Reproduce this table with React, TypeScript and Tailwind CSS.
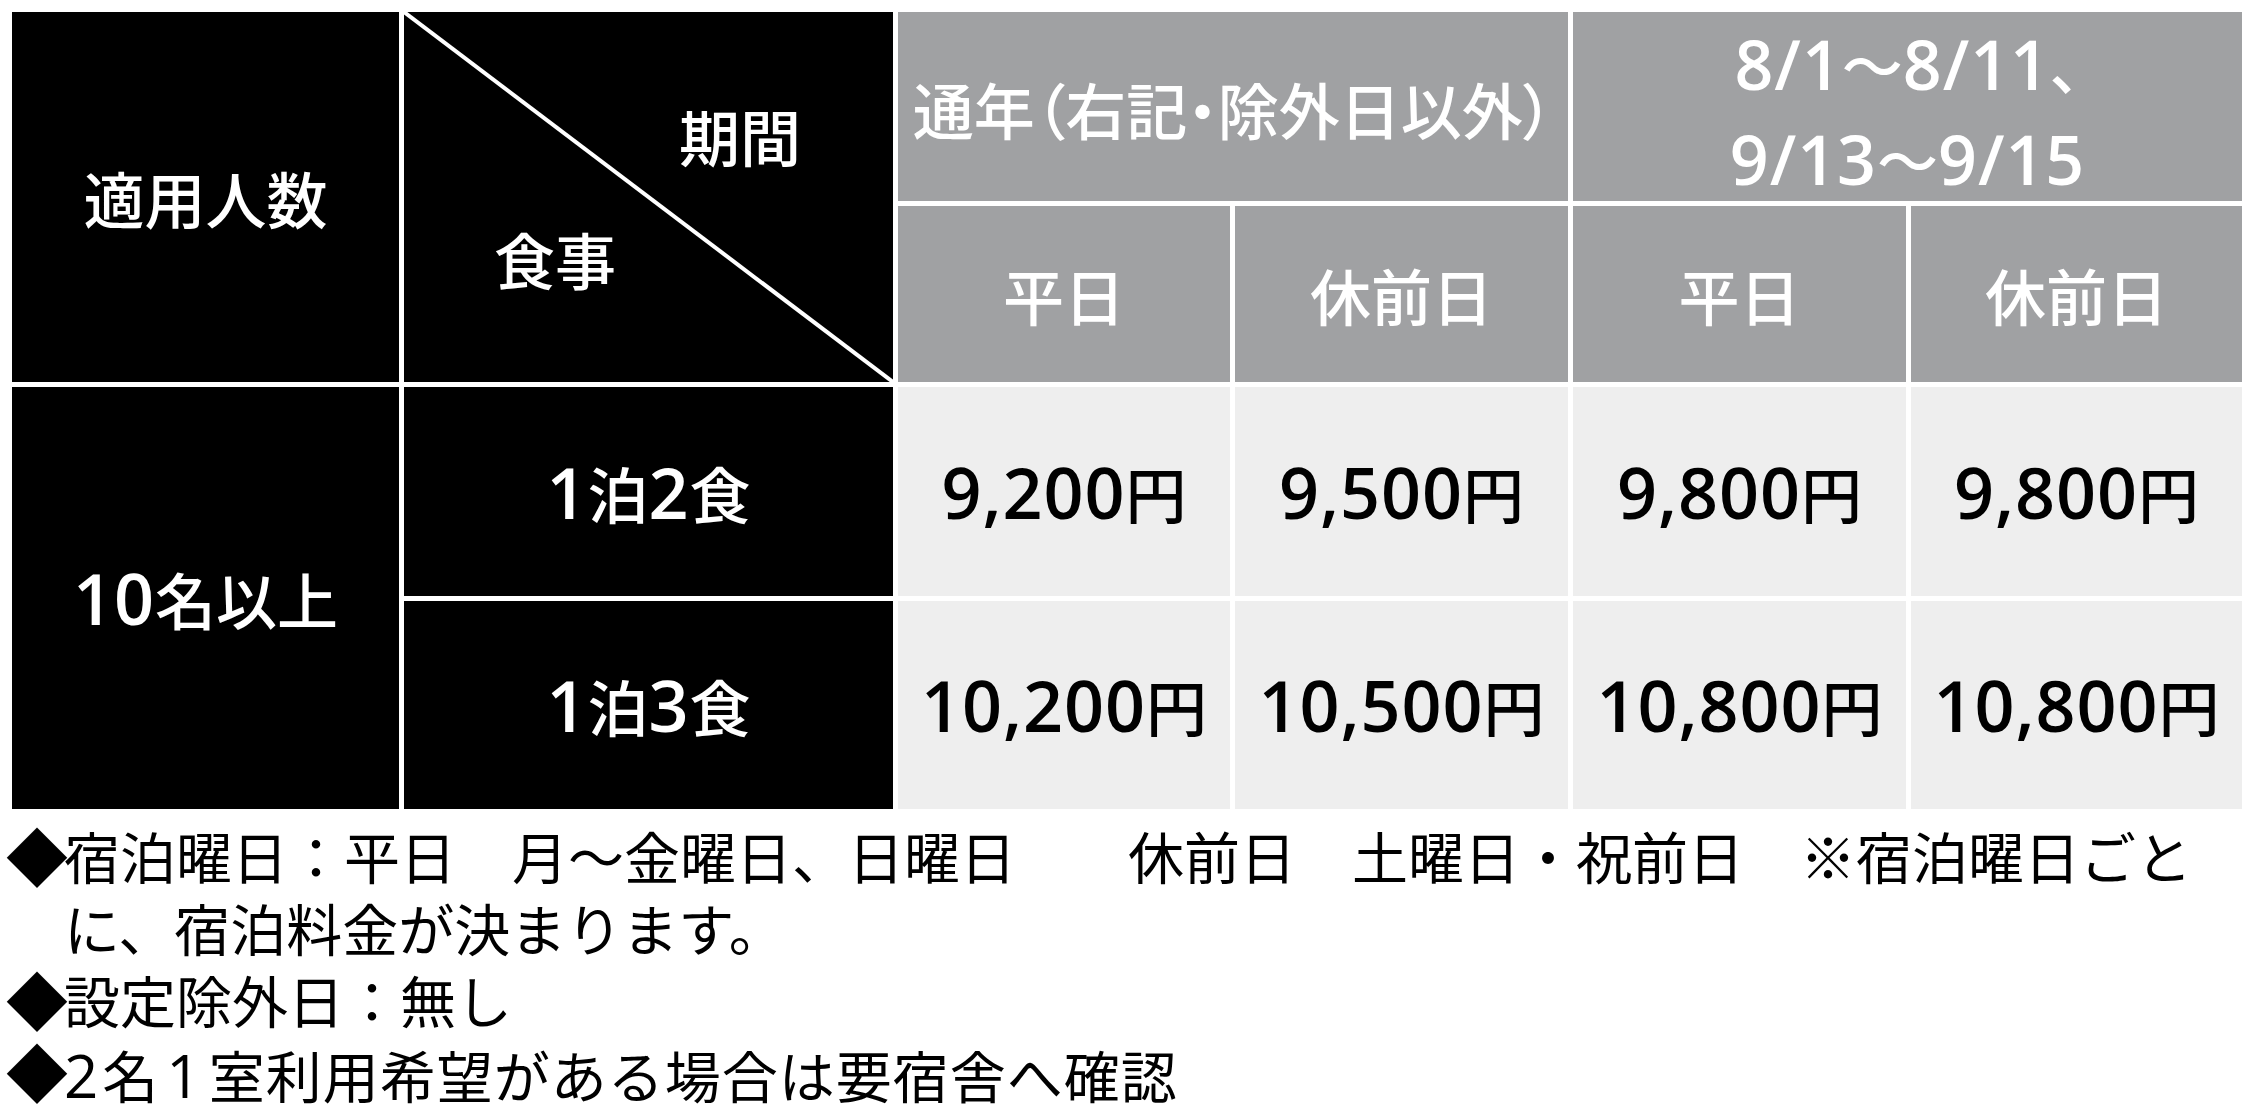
import React from "react";

type MixedProps = { text: string; num: string; cjk: string };

function Mixed({ text, num, cjk }: MixedProps) {
  const parts = text.match(/[0-9,\/]+|[^0-9,\/]+/g) ?? [];
  return (
    <>
      {parts.map((p, i) =>
        /[0-9,\/]/.test(p[0]) ? (
          <span key={i} className={num}>
            {p}
          </span>
        ) : (
          <span key={i} className={cjk}>
            {p}
          </span>
        )
      )}
    </>
  );
}

const NUM_BIG =
  "font-['Open_Sans','Noto_Sans_CJK_JP',sans-serif] text-[70px] tracking-[1px] font-semibold leading-none";
const CJK_BIG = "font-['Noto_Sans_CJK_JP',sans-serif] text-[61px] font-medium leading-none";
const NUM_HEAD =
  "font-['Open_Sans','Noto_Sans_CJK_JP',sans-serif] text-[68px] tracking-[1px] font-semibold leading-none";
const CJK_HEAD = "font-['Noto_Sans_CJK_JP',sans-serif] text-[61px] font-medium leading-none";

const black = "bg-black text-white flex items-center justify-center leading-none";
const gray = "bg-[#a0a1a3] text-white flex items-center justify-center leading-none";
const light = "bg-[#eeeeee] text-black flex items-center justify-center leading-none";

function Price({ v }: { v: string }) {
  return (
    <div className={light}>
      <span className="whitespace-nowrap leading-none">
        <Mixed text={v + "円"} num={NUM_BIG} cjk={CJK_BIG} />
      </span>
    </div>
  );
}

export default function App() {
  return (
    <div className="min-h-screen w-full bg-white text-black font-['Noto_Sans_CJK_JP',sans-serif]">
      <div className="ml-[12px] pt-[12px] grid w-max grid-cols-[387px_489px_332px_333px_333px_331px] grid-rows-[189px_176px_209px_208px] gap-[5px]">
        {/* 適用人数 */}
        <div className={`${black} row-span-2`}>
          <span className="text-[61px] font-medium">適用人数</span>
        </div>

        {/* diagonal cell */}
        <div className="row-span-2 bg-black text-white relative leading-none">
          <svg
            className="absolute inset-0 w-full h-full"
            viewBox="0 0 489 370"
            preserveAspectRatio="none"
          >
            <line x1="0" y1="0" x2="489" y2="370" stroke="white" strokeWidth="4" />
          </svg>
          <span className="absolute left-[336px] top-[123px] -translate-x-1/2 -translate-y-1/2 text-[61px] font-medium whitespace-nowrap">
            期間
          </span>
          <span className="absolute left-[151px] top-[246px] -translate-x-1/2 -translate-y-1/2 text-[61px] font-medium whitespace-nowrap">
            食事
          </span>
        </div>

        {/* 通年 */}
        <div className={`${gray} col-span-2`}>
          <span className="text-[61px] font-medium whitespace-nowrap [font-feature-settings:'palt'] mt-[4px]">
            通年（右記・除外日以外）
          </span>
        </div>

        {/* dates */}
        <div className={`${gray} col-span-2`}>
          <div className="flex flex-col items-center mt-[10px] [font-feature-settings:'palt']">
            <div className="h-[95px] flex items-center whitespace-nowrap leading-none">
              <span className="leading-none">
                <Mixed text="8/1～8/11、" num={NUM_HEAD} cjk={CJK_HEAD} />
              </span>
            </div>
            <div className="h-[95px] flex items-center whitespace-nowrap leading-none">
              <span className="leading-none">
                <Mixed text="9/13～9/15" num={NUM_HEAD} cjk={CJK_HEAD} />
              </span>
            </div>
          </div>
        </div>

        {/* header row 2 */}
        <div className={gray}>
          <span className="text-[61px] font-medium">平日</span>
        </div>
        <div className={gray}>
          <span className="text-[61px] font-medium">休前日</span>
        </div>
        <div className={gray}>
          <span className="text-[61px] font-medium">平日</span>
        </div>
        <div className={gray}>
          <span className="text-[61px] font-medium">休前日</span>
        </div>

        {/* data row 1 */}
        <div className={`${black} row-span-2`}>
          <span className="whitespace-nowrap leading-none">
            <Mixed text="10名以上" num={NUM_BIG} cjk={CJK_BIG} />
          </span>
        </div>
        <div className={black}>
          <span className="whitespace-nowrap leading-none">
            <Mixed text="1泊2食" num={NUM_BIG} cjk={CJK_BIG} />
          </span>
        </div>
        <Price v="9,200" />
        <Price v="9,500" />
        <Price v="9,800" />
        <Price v="9,800" />

        {/* data row 2 */}
        <div className={black}>
          <span className="whitespace-nowrap leading-none">
            <Mixed text="1泊3食" num={NUM_BIG} cjk={CJK_BIG} />
          </span>
        </div>
        <Price v="10,200" />
        <Price v="10,500" />
        <Price v="10,800" />
        <Price v="10,800" />
      </div>

      {/* notes */}
      <div className="mt-[10px] pl-[6px] text-[56px] leading-[72px] font-normal whitespace-nowrap">
        <div className="flex">
          <span className="w-[58px] text-[62px]">◆</span>
          <span>宿泊曜日：平日　月～金曜日、日曜日　　休前日　土曜日・祝前日　※宿泊曜日ごと</span>
        </div>
        <div className="pl-[58px]">に、宿泊料金が決まります。</div>
        <div className="flex">
          <span className="w-[58px] text-[62px]">◆</span>
          <span>設定除外日：無し</span>
        </div>
        <div className="flex items-baseline">
          <span className="w-[58px] text-[62px]">◆</span>
          <span className="font-['Open_Sans','Noto_Sans_CJK_JP',sans-serif] text-[60px]">2</span>
          <span className="pl-[4px]">名</span>
          <span className="font-['Open_Sans','Noto_Sans_CJK_JP',sans-serif] text-[60px] pl-[8px] pr-[8px]">1</span>
          <span className="tracking-[1px]">室利用希望がある場合は要宿舎へ確認</span>
        </div>
      </div>
    </div>
  );
}
